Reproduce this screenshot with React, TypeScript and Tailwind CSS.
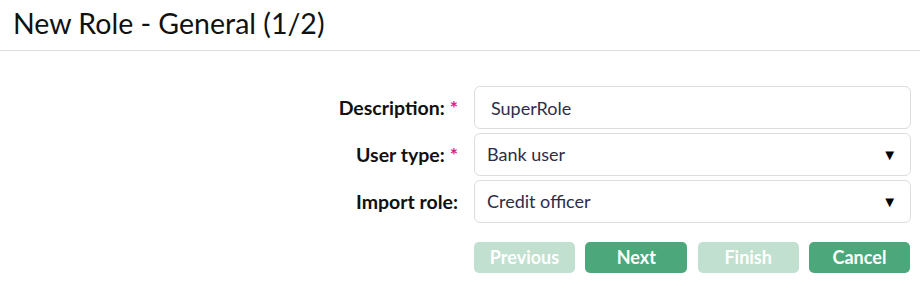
import { useState } from 'react';

const font = { fontFamily: 'Lato, "Open Sans", sans-serif' };

function Field({ label, required, children }: { label: string; required?: boolean; children: React.ReactNode }) {
  return (
    <div className="flex items-center">
      <div className="w-[460px] pr-[2px] text-right text-[19.5px] font-bold text-[#111]">
        {label}
        {required && <span className="ml-[5px] text-[#e0198c]">*</span>}
      </div>
      <div className="ml-[14px] w-[437px]">{children}</div>
    </div>
  );
}

function SelectBox({ value }: { value: string }) {
  return (
    <div className="flex h-[43px] items-center justify-between rounded-[6px] border border-[#dddddd] bg-white pl-[12px] pr-[13px] text-[18px] text-[#2d2d4b]">
      <span>{value}</span>
      <span className="text-[15px] text-black">▼</span>
    </div>
  );
}

export default function App() {
  const [description, setDescription] = useState('SuperRole');

  return (
    <div className="h-[291px] w-[920px] bg-white" style={font}>
      <div className="flex h-[51px] items-center border-b border-[#dddddd] px-[13px] pb-[4px]">
        <h1 className="text-[28.5px] font-normal text-[#111]">New Role - General (1/2)</h1>
      </div>

      <div className="flex flex-col gap-[4px] pt-[35px]">
        <Field label="Description:" required>
          <input
            value={description}
            onChange={(event) => setDescription(event.target.value)}
            className="h-[43px] w-full rounded-[6px] border border-[#dddddd] px-[16px] text-[18px] text-[#2d2d4b] outline-none"
          />
        </Field>
        <Field label="User type:" required>
          <SelectBox value="Bank user" />
        </Field>
        <Field label="Import role:">
          <SelectBox value="Credit officer" />
        </Field>
      </div>

      <div className="ml-[474px] mt-[19px] flex w-[436px] justify-between">
        <button className="h-[31px] w-[101px] rounded-[5px] bg-[#c1e0d0] text-[18px] font-bold text-white">Previous</button>
        <button className="h-[31px] w-[102px] rounded-[5px] bg-[#4ca87b] text-[18px] font-bold text-white">Next</button>
        <button className="h-[31px] w-[101px] rounded-[5px] bg-[#c1e0d0] text-[18px] font-bold text-white">Finish</button>
        <button className="h-[31px] w-[101px] rounded-[5px] bg-[#4ca87b] text-[18px] font-bold text-white">Cancel</button>
      </div>
    </div>
  );
}
